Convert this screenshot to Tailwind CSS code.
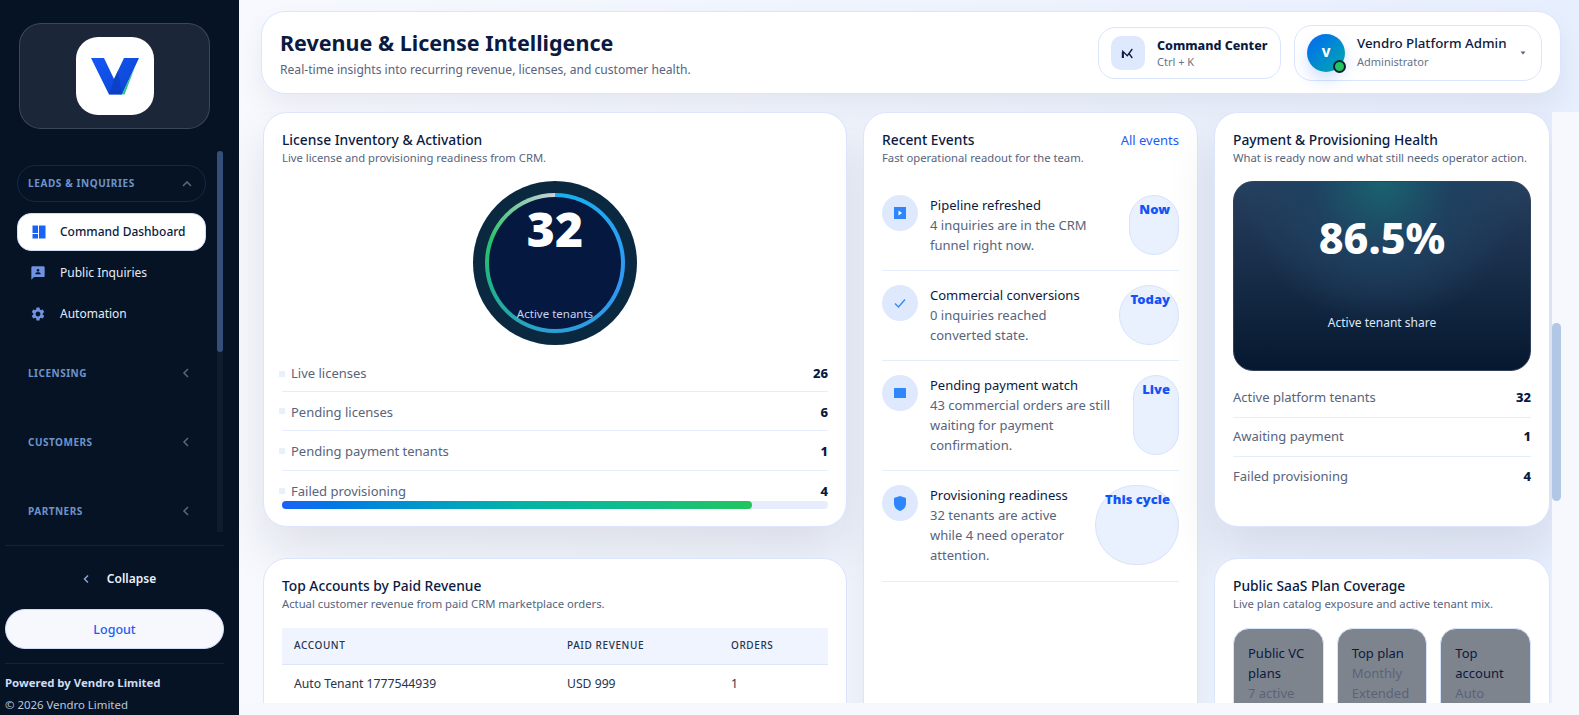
<!DOCTYPE html>
<html lang="en">
  <head>
    <meta charset="UTF-8" />
    <meta name="viewport" content="width=device-width, initial-scale=1.0" />
    <title>Revenue &amp; License Intelligence</title>
    <script src="https://cdn.jsdelivr.net/npm/@tailwindcss/browser@4"></script>
  </head>
  <body class="h-screen overflow-hidden bg-[#f6f8fd] font-['Noto_Sans','Open_Sans',sans-serif] text-[#0b1a3f]">
    <div class="flex h-[715px]">
      <!-- Sidebar -->
      <aside class="flex h-full w-[239px] shrink-0 flex-col bg-[#061325] pb-px pl-[5px] pr-[15px]">
        <div class="ml-[14px] mt-[23px] flex h-[106px] w-[191px] items-center justify-center rounded-[22px] border border-white/15 bg-[#1b2738]">
          <div class="flex h-[78px] w-[78px] items-center justify-center rounded-[22px] bg-white">
            <svg width="48" height="37" viewBox="0 0 48 37">
              <defs>
                <linearGradient id="vg" x1="0" y1="0" x2="1" y2="1">
                  <stop offset="0" stop-color="#1557f5" />
                  <stop offset="1" stop-color="#0b45d0" />
                </linearGradient>
              </defs>
              <path d="M0 0H13L23 21L33 0H48L31 36.5H18Z" fill="url(#vg)" />
              <path d="M23 21L27 12.5L31 36.5H18Z" fill="#0a3bb8" opacity="0.55" />
              <path d="M31 36.5L44 9L33.5 36.5Z" fill="#22c580" />
            </svg>
          </div>
        </div>

        <div class="mt-[22px] flex min-h-0 flex-1 gap-[11px] overflow-hidden">
          <nav class="ml-3 w-[189px] shrink-0">
            <div class="mt-[14px] flex h-[37px] items-center justify-between rounded-full border border-[#12294d] pl-[10px] pr-[12px]">
              <span class="text-[10px] font-bold tracking-[0.6px] text-[#6f93c9]">LEADS &amp; INQUIRIES</span>
              <svg width="12" height="12" viewBox="0 0 12 12" fill="none" stroke="#56657d" stroke-width="1.6"><path d="M2 8L6 4L10 8" /></svg>
            </div>
            <a class="mt-[11px] flex h-[38px] items-center rounded-[14px] border border-[#cfdcf8] bg-white pl-[14px] text-[12px] font-medium text-[#0b1a3f]">
              <svg width="14" height="14" viewBox="0 0 14 14" fill="#1a62f5" class="mr-[14px]"><rect x="0.5" y="0.5" width="5.5" height="7.5" /><rect x="0.5" y="9" width="5.5" height="4.5" /><rect x="7" y="0.5" width="6.5" height="13" /></svg>
              Command Dashboard
            </a>
            <a class="mt-[3px] flex h-[38px] items-center pl-[13px] text-[12px] text-[#e3ecfb]">
              <svg width="16" height="16" viewBox="0 0 24 24" fill="#6f93e0" class="mr-[14px]"><path d="M20 2H4.01c-1.1 0-2 .9-2 2v18L6 18h14c1.1 0 2-.9 2-2V4c0-1.1-.9-2-2-2zm-8 4c1.1 0 2 .9 2 2s-.9 2-2 2-2-.9-2-2 .9-2 2-2zm4 8H8v-1c0-1.33 2.67-2 4-2s4 .67 4 2v1z" /></svg>
              Public Inquiries
            </a>
            <a class="mt-[3px] flex h-[38px] items-center pl-[13px] text-[12px] text-[#e3ecfb]">
              <svg width="16" height="16" viewBox="0 0 24 24" fill="#6f93e0" class="mr-[14px]"><path d="M19.14 12.94c.04-.3.06-.61.06-.94 0-.32-.02-.64-.07-.94l2.03-1.58c.18-.14.23-.41.12-.61l-1.92-3.32c-.12-.22-.37-.29-.59-.22l-2.39.96c-.5-.38-1.03-.7-1.62-.94l-.36-2.54c-.04-.24-.24-.41-.48-.41h-3.84c-.24 0-.43.17-.47.41l-.36 2.54c-.59.24-1.13.57-1.62.94l-2.39-.96c-.22-.08-.47 0-.59.22L2.74 8.87c-.12.21-.08.47.12.61l2.03 1.58c-.05.3-.09.63-.09.94s.02.64.07.94l-2.03 1.58c-.18.14-.23.41-.12.61l1.92 3.32c.12.22.37.29.59.22l2.39-.96c.5.38 1.03.7 1.62.94l.36 2.54c.05.24.24.41.48.41h3.84c.24 0 .44-.17.47-.41l.36-2.54c.59-.24 1.13-.56 1.62-.94l2.39.96c.22.08.47 0 .59-.22l1.92-3.32c.12-.22.07-.47-.12-.61l-2.01-1.58zM12 15.6c-1.98 0-3.6-1.62-3.6-3.6s1.62-3.6 3.6-3.6 3.6 1.62 3.6 3.6-1.62 3.6-3.6 3.6z" /></svg>
              Automation
            </a>
            <div class="mt-[30px] flex h-[20px] items-center justify-between pl-[11px] pr-[15px]">
              <span class="text-[10px] font-bold tracking-[0.5px] text-[#6f93c9]">LICENSING</span>
              <svg width="10" height="12" viewBox="0 0 10 12" fill="none" stroke="#56657d" stroke-width="1.6"><path d="M7 2L3 6L7 10" /></svg>
            </div>
            <div class="mt-[49px] flex h-[20px] items-center justify-between pl-[11px] pr-[15px]">
              <span class="text-[10px] font-bold tracking-[0.5px] text-[#6f93c9]">CUSTOMERS</span>
              <svg width="10" height="12" viewBox="0 0 10 12" fill="none" stroke="#56657d" stroke-width="1.6"><path d="M7 2L3 6L7 10" /></svg>
            </div>
            <div class="mt-[49px] flex h-[20px] items-center justify-between pl-[11px] pr-[15px]">
              <span class="text-[10px] font-bold tracking-[0.5px] text-[#6f93c9]">PARTNERS</span>
              <svg width="10" height="12" viewBox="0 0 10 12" fill="none" stroke="#56657d" stroke-width="1.6"><path d="M7 2L3 6L7 10" /></svg>
            </div>
          </nav>
          <!-- nav scrollbar -->
          <div class="h-[381px] w-[6px] shrink-0 bg-[#0e1c30]">
            <div class="h-[201px] w-[6px] rounded-full bg-[#34507a]"></div>
          </div>
        </div>

        <div class="border-t border-[#14233a]">
          <div class="flex h-[63px] items-center justify-center pl-[9px] pt-[3px] text-[12px] font-semibold text-[#eaf1fe]">
            <svg width="8" height="10" viewBox="0 0 8 10" fill="none" stroke="#8ba6d6" stroke-width="1.5" class="mr-[17px]"><path d="M6 1.5L2.5 5L6 8.5" /></svg>
            Collapse
          </div>
          <button class="h-[40px] w-full rounded-full border border-[#cfdcf8] bg-[#f6f8fd] pt-[2px] text-[12.5px] font-medium text-[#1a5cf5]">Logout</button>
        </div>
        <div class="mt-[14px] border-t border-[#14233a] pt-[10px]">
          <p class="text-[11.4px] font-bold leading-[18px] text-[#cfdcf0]">Powered by Vendro Limited</p>
          <p class="mt-[4px] text-[11.4px] leading-[18px] text-[#b9c8df]">&copy; 2026 Vendro Limited</p>
        </div>
      </aside>

      <!-- Main -->
      <main class="flex h-full min-w-0 flex-1 flex-col bg-[linear-gradient(90deg,#f7f9fe_0%,#e7eefd_100%)]">
        <header class="ml-[22px] mt-[11px] flex h-[83px] w-[1300px] shrink-0 items-center justify-between rounded-[24px] border border-[#dbe6fc] bg-white pl-[18px] pr-[18px] shadow-[0_14px_30px_rgba(15,23,42,0.06)]">
          <div class="pt-[2px]">
            <h1 class="text-[21.5px] font-bold leading-[30px] text-[#0a1a40]">Revenue &amp; License Intelligence</h1>
            <p class="mt-[3px] text-[12.1px] leading-[18px] text-[#56647d]">Real-time insights into recurring revenue, licenses, and customer health.</p>
          </div>
          <div class="flex items-center gap-[13px]">
            <div class="flex h-[52px] w-[183px] items-center rounded-[17px] border border-[#dbe6fc] bg-white pl-[12px]">
              <div class="flex h-[34px] w-[34px] items-center justify-center rounded-[10px] bg-[#dfe9fd]">
                <svg width="14" height="14" viewBox="0 0 14 14" fill="none" stroke="#0b1a3f" stroke-width="1.3"><path d="M1.8 12V5.3L6.3 9.7L11.3 3M8 7.5L11.3 12" /><path d="M1.8 12V6" stroke-width="2" /></svg>
              </div>
              <div class="ml-[12px]">
                <p class="text-[12.5px] font-extrabold leading-[17px] text-[#0a1a40]">Command Center</p>
                <p class="text-[11px] leading-[15px] text-[#66738c]">Ctrl + K</p>
              </div>
            </div>
            <div class="flex h-[56px] w-[248px] items-center rounded-[18px] border border-[#dbe6fc] bg-white pl-[12px]">
              <div class="relative flex h-[38px] w-[38px] shrink-0 items-center justify-center rounded-full bg-gradient-to-br from-[#1a62f5] to-[#07a8a8] text-[13px] font-extrabold text-white shadow-[0_8px_16px_rgba(26,98,245,0.2)]">
                V
                <span class="absolute bottom-[-1px] right-[-1px] h-[13px] w-[13px] rounded-full border-2 border-[#0b2033] bg-[#22c55e]"></span>
              </div>
              <div class="ml-[12px] w-[153px] pb-[3px]">
                <p class="whitespace-nowrap text-[13.3px] font-medium leading-[18px] text-[#0a1a40]">Vendro Platform Admin</p>
                <p class="mt-[2px] text-[11px] leading-[15px] text-[#66738c]">Administrator</p>
              </div>
              <svg width="6" height="4" viewBox="0 0 6 4" fill="#56647d" class="ml-[10px]"><path d="M0.5 0.5H5.5L3 3.5Z" /></svg>
            </div>
          </div>
        </header>

        <div class="mt-[18px] flex min-h-0 flex-1">
          <div class="min-w-0 flex-1 overflow-hidden">
            <div class="ml-[24px] grid grid-cols-[584px_335px_336px] gap-x-[16px]">
              <!-- Left column -->
              <div class="flex flex-col gap-[31px]">
                <section class="h-[415px] overflow-hidden rounded-[24px] border border-[#dbe6fc] bg-white px-[18px] pt-[17px] shadow-[0_24px_50px_rgba(15,23,42,0.1)]">
                  <h2 class="text-[13.8px] font-medium leading-[20px]">License Inventory &amp; Activation</h2>
                  <p class="text-[11.25px] leading-[16px] text-[#56647d]">Live license and provisioning readiness from CRM.</p>
                  <div class="mt-[15px] flex justify-center">
                    <div class="relative h-[164px] w-[164px] rounded-full bg-[#0b2841]">
                      <div class="absolute inset-[12px] rounded-full bg-[conic-gradient(#19b2ee_0deg,#3197f5_110deg,#2aa0d0_190deg,#22b08c_250deg,#2bc26a_290deg,#c9d2d4_358deg)]"></div>
                      <div class="absolute inset-[16px] flex flex-col items-center rounded-full bg-[#05183f]">
                        <span class="mt-[1px] text-[48px] font-black leading-[62px] text-white">32</span>
                        <span class="mt-[46px] text-[11.5px] leading-[16px] text-[#c3d4f2]">Active tenants</span>
                      </div>
                    </div>
                  </div>
                  <ul class="mt-[8px]">
                    <li class="relative flex h-[39px] items-center justify-between border-b border-[#e6edfc] pl-[9px] pt-[4px] text-[13px] text-[#56647d]">
                      <span class="absolute left-[-3px] top-[18px] h-[6px] w-[6px] bg-[#e8effd]"></span>
                      <span>Live licenses</span><b class="font-extrabold text-[#0a1a40]">26</b>
                    </li>
                    <li class="relative flex h-[39px] items-center justify-between border-b border-[#e6edfc] pl-[9px] pt-[3px] text-[13px] text-[#56647d]">
                      <span class="absolute left-[-3px] top-[16px] h-[6px] w-[6px] bg-[#e8effd]"></span>
                      <span>Pending licenses</span><b class="font-extrabold text-[#0a1a40]">6</b>
                    </li>
                    <li class="relative flex h-[40px] items-center justify-between border-b border-[#e6edfc] pl-[9px] pt-[2px] text-[13px] text-[#56647d]">
                      <span class="absolute left-[-3px] top-[17px] h-[6px] w-[6px] bg-[#e8effd]"></span>
                      <span>Pending payment tenants</span><b class="font-extrabold text-[#0a1a40]">1</b>
                    </li>
                    <li class="relative flex h-[30px] items-center justify-between pl-[9px] pt-[12px] text-[13px] text-[#56647d]">
                      <span class="absolute left-[-3px] top-[17px] h-[6px] w-[6px] bg-[#e8effd]"></span>
                      <span>Failed provisioning</span><b class="font-extrabold text-[#0a1a40]">4</b>
                    </li>
                  </ul>
                  <div class="h-[8px] w-full rounded-full bg-[#e6edfc]">
                    <div class="h-full rounded-full bg-gradient-to-r from-[#1a62f5] via-[#03b3a8] to-[#22c55e]" style="width: 86%"></div>
                  </div>
                </section>

                <section class="h-[240px] rounded-[24px] border border-[#dbe6fc] bg-white px-[18px] pt-[17px]">
                  <h2 class="text-[13.8px] font-medium leading-[20px]">Top Accounts by Paid Revenue</h2>
                  <p class="text-[11.25px] leading-[16px] text-[#56647d]">Actual customer revenue from paid CRM marketplace orders.</p>
                  <table class="mt-[16px] w-full table-fixed text-left">
                    <thead>
                      <tr class="h-[36px] border-b border-[#dbe6fc] bg-[#eff4fe] text-[10px] font-medium tracking-[0.6px] text-[#26344f]">
                        <th class="w-[285px] pl-3 font-medium">ACCOUNT</th>
                        <th class="w-[164px] pl-0 font-medium">PAID REVENUE</th>
                        <th class="font-medium">ORDERS</th>
                      </tr>
                    </thead>
                    <tbody>
                      <tr class="h-[40px] text-[12.2px] text-[#26344f]">
                        <td class="pl-3">Auto Tenant 1777544939</td>
                        <td>USD 999</td>
                        <td>1</td>
                      </tr>
                    </tbody>
                  </table>
                </section>
              </div>

              <!-- Recent events -->
              <section class="h-[640px] rounded-[24px] border border-[#dbe6fc] bg-white px-[18px] pt-[17px] shadow-[0_18px_40px_rgba(15,23,42,0.05)]">
                <div class="flex items-start justify-between">
                  <div>
                    <h2 class="text-[13.8px] font-medium leading-[20px]">Recent Events</h2>
                    <p class="text-[11.25px] leading-[16px] text-[#56647d]">Fast operational readout for the team.</p>
                  </div>
                  <a class="text-[13px] leading-[20px] text-[#1a5cf5]">All events</a>
                </div>
                <div class="mt-[14px]">
                  <div class="flex h-[91px] items-start gap-3 border-b border-[#e6edfc] pt-[15px]">
                    <div class="flex h-[36px] w-[36px] shrink-0 items-center justify-center rounded-full bg-[#dfe9fd]">
                      <svg width="12" height="12" viewBox="0 0 12 12"><rect width="12" height="12" fill="#2f86fb" /><path d="M4.5 3.5L8 6L4.5 8.5Z" fill="#fff" /></svg>
                    </div>
                    <div class="flex-1">
                      <p class="text-[13px] leading-[20px] text-[#0a1a40]">Pipeline refreshed</p>
                      <p class="w-[170px] text-[13px] leading-[20px] text-[#56647d]">4 inquiries are in the CRM funnel right now.</p>
                    </div>
                    <span class="h-[60px] w-[50px] shrink-0 rounded-[25px] border border-[#d7e3fb] bg-[#eaf1fe] pr-[8px] text-right text-[13px] font-black leading-[26px] text-[#1254f5]">Now</span>
                  </div>
                  <div class="flex h-[90px] items-start gap-3 border-b border-[#e6edfc] pt-[14px]">
                    <div class="flex h-[36px] w-[36px] shrink-0 items-center justify-center rounded-full bg-[#dfe9fd]">
                      <svg width="14" height="12" viewBox="0 0 14 12" fill="none" stroke="#3d8afa" stroke-width="1.5"><path d="M2 6.5L5.5 10L12 2.5" /></svg>
                    </div>
                    <div class="flex-1">
                      <p class="text-[13px] leading-[20px] text-[#0a1a40]">Commercial conversions</p>
                      <p class="w-[170px] text-[13px] leading-[20px] text-[#56647d]">0 inquiries reached converted state.</p>
                    </div>
                    <span class="h-[60px] w-[60px] shrink-0 rounded-full border border-[#d7e3fb] bg-[#eaf1fe] pr-[8px] text-right text-[13px] font-black leading-[26px] text-[#1254f5]">Today</span>
                  </div>
                  <div class="flex h-[110px] items-start gap-3 border-b border-[#e6edfc] pt-[14px]">
                    <div class="flex h-[36px] w-[36px] shrink-0 items-center justify-center rounded-full bg-[#dfe9fd]">
                      <svg width="12" height="10" viewBox="0 0 12 10"><rect width="12" height="10" rx="0.5" fill="#2f86fb" /></svg>
                    </div>
                    <div class="flex-1">
                      <p class="text-[13px] leading-[20px] text-[#0a1a40]">Pending payment watch</p>
                      <p class="text-[13px] leading-[20px] text-[#56647d]">43 commercial orders are still waiting for payment confirmation.</p>
                    </div>
                    <span class="h-[80px] w-[46px] shrink-0 rounded-[23px] border border-[#d7e3fb] bg-[#eaf1fe] pr-[8px] text-right text-[13px] font-black leading-[26px] text-[#1254f5]">Live</span>
                  </div>
                  <div class="flex h-[111px] items-start gap-3 border-b border-[#e6edfc] pt-[14px]">
                    <div class="flex h-[36px] w-[36px] shrink-0 items-center justify-center rounded-full bg-[#dfe9fd]">
                      <svg width="12" height="15" viewBox="0 0 12 15"><path d="M6 0L12 2V8C12 11.5 9 14 6 15C3 14 0 11.5 0 8V2Z" fill="#2f86fb" /></svg>
                    </div>
                    <div class="min-w-0 flex-1">
                      <p class="text-[13px] leading-[20px] text-[#0a1a40]">Provisioning readiness</p>
                      <p class="w-[148px] text-[13px] leading-[20px] text-[#56647d]">32 tenants are active while 4 need operator attention.</p>
                    </div>
                    <span class="h-[80px] w-[84px] shrink-0 whitespace-nowrap rounded-full border border-[#d7e3fb] bg-[#eaf1fe] pr-[8px] text-right text-[13px] font-black leading-[26px] text-[#1254f5]">This cycle</span>
                  </div>
                </div>
              </section>

              <!-- Right column -->
              <div class="flex flex-col gap-[31px]">
                <section class="h-[415px] rounded-[24px] border border-[#dbe6fc] bg-white px-[18px] pt-[17px] shadow-[0_24px_50px_rgba(15,23,42,0.1)]">
                  <h2 class="text-[13.8px] font-medium leading-[20px]">Payment &amp; Provisioning Health</h2>
                  <p class="whitespace-nowrap text-[11.3px] leading-[16px] text-[#56647d]">What is ready now and what still needs operator action.</p>
                  <div class="mt-[15px] flex h-[190px] flex-col items-center rounded-[20px] border border-[#31425c] bg-[radial-gradient(circle_at_50%_0%,#1a6270_0%,#1f4060_30%,transparent_60%),linear-gradient(180deg,#27405f_0%,#06182f_100%)] text-white">
                    <span class="mt-[24px] text-[43px] font-extrabold leading-[64px]">86.5%</span>
                    <span class="mt-[44px] text-[12px] leading-[18px] text-[#dce8fb]">Active tenant share</span>
                  </div>
                  <ul class="mt-[8px]">
                    <li class="flex h-[39px] items-center justify-between border-b border-[#e6edfc] text-[13px] text-[#56647d]"><span>Active platform tenants</span><b class="font-extrabold text-[#0a1a40]">32</b></li>
                    <li class="flex h-[39px] items-center justify-between border-b border-[#e6edfc] text-[13px] text-[#56647d]"><span>Awaiting payment</span><b class="font-extrabold text-[#0a1a40]">1</b></li>
                    <li class="flex h-[39px] items-center justify-between text-[13px] text-[#56647d]"><span>Failed provisioning</span><b class="font-extrabold text-[#0a1a40]">4</b></li>
                  </ul>
                </section>

                <section class="h-[240px] rounded-[24px] border border-[#dbe6fc] bg-white px-[18px] pt-[17px]">
                  <h2 class="text-[13.8px] font-medium leading-[20px]">Public SaaS Plan Coverage</h2>
                  <p class="text-[11.25px] leading-[16px] text-[#56647d]">Live plan catalog exposure and active tenant mix.</p>
                  <div class="mt-[16px] grid grid-cols-3 gap-[13px]">
                    <div class="h-[110px] rounded-[16px] border border-[#d7e3fb] bg-[#7e848e] px-[14px] pt-[14px] text-[13px] leading-[20px]">
                      <p class="text-[#0b1a3f]">Public VC plans</p>
                      <p class="text-[#59637a]">7 active</p>
                    </div>
                    <div class="h-[110px] rounded-[16px] border border-[#d7e3fb] bg-[#7e848e] px-[14px] pt-[14px] text-[13px] leading-[20px]">
                      <p class="text-[#0b1a3f]">Top plan</p>
                      <p class="text-[#59637a]">Monthly Extended</p>
                    </div>
                    <div class="h-[110px] rounded-[16px] border border-[#d7e3fb] bg-[#7e848e] px-[14px] pt-[14px] text-[13px] leading-[20px]">
                      <p class="text-[#0b1a3f]">Top account</p>
                      <p class="text-[#59637a]">Auto Tenant</p>
                    </div>
                  </div>
                </section>
              </div>
            </div>
          </div>
          <!-- page scrollbar -->
          <div class="w-[27px] shrink-0 bg-[#f6f8fd]">
            <div class="mt-[211px] h-[178px] w-[9px] rounded-full bg-[#b0c7e6]"></div>
          </div>
        </div>
        <div class="h-3 shrink-0 bg-[#f6f8fd]"></div>
      </main>
    </div>
  </body>
</html>
